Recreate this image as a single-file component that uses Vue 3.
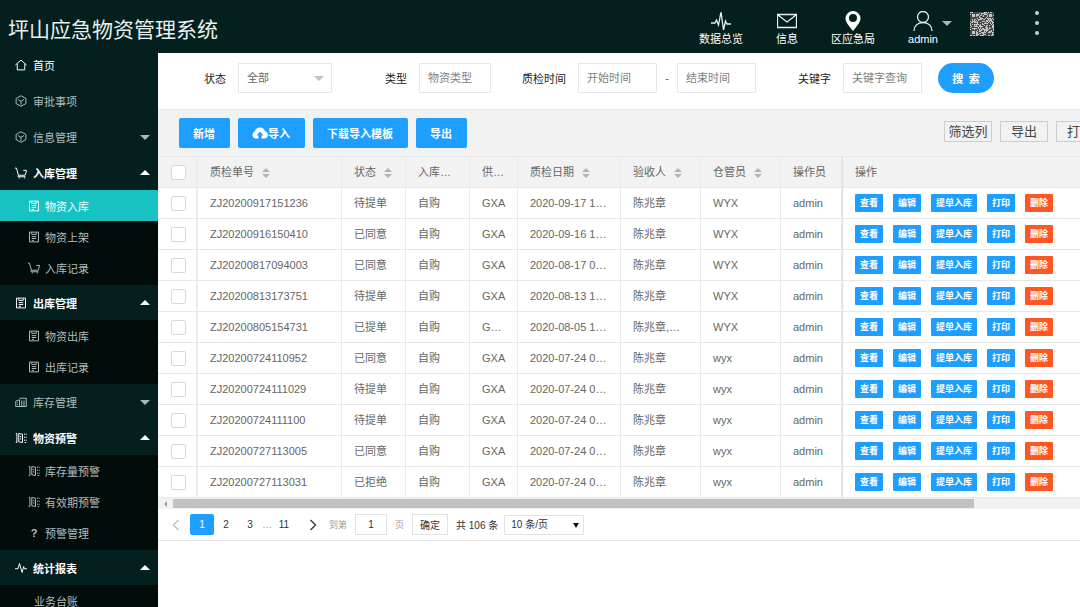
<template>
    <div class="layout">
        <aside class="sidebar">
            <h1 class="brand">坪山应急物资管理系统</h1>
            <nav>
                <ul class="menu">
                    <li v-for="item in menus" :key="item.name">
                        <a href="#" class="menu-item" :class="{ open: item.children, home: item.home }">
                            <svg class="menu-icon" viewBox="0 0 16 16"><path :d="icons[item.icon]" /></svg>
                            <span>{{ item.name }}</span>
                            <i v-if="item.children" class="arrow up"></i>
                            <i v-else-if="item.folded" class="arrow down"></i>
                        </a>
                        <ul v-if="item.children" class="submenu">
                            <li v-for="child in item.children" :key="child.name">
                                <a href="#" class="sub-item" :class="{ active: child.active, plain: !child.icon }">
                                    <b v-if="child.icon === 'help'" class="help">?</b>
                                    <svg v-else-if="child.icon" class="menu-icon" viewBox="0 0 16 16">
                                        <path :d="icons[child.icon]" />
                                    </svg>
                                    <span>{{ child.name }}</span>
                                </a>
                            </li>
                        </ul>
                    </li>
                </ul>
            </nav>
        </aside>

        <div class="main">
            <header class="topbar">
                <a href="#" class="top-link">
                    <svg viewBox="0 0 20 20"><path d="M0 12h4l1.500-3 2 5 2.500-13 2.500 18 2-9 1.500 3h4" /></svg>
                    <span>数据总览</span>
                </a>
                <a href="#" class="top-link">
                    <svg class="mail" viewBox="0 0 20 20"><path d="M0.500 3.500h19v13h-19zM1 4l9 7 9-7" /></svg>
                    <span>信息</span>
                </a>
                <a href="#" class="top-link">
                    <svg class="pin" viewBox="0 0 20 20">
                        <path fill-rule="evenodd" d="M10 0a7.500 7.500 0 0 1 7.500 7.500c0 4-4.500 8.500-7.500 12.500C7 16 2.500 11.500 2.500 7.500A7.500 7.500 0 0 1 10 0zm0 3a4 4 0 1 0 0 8 4 4 0 0 0 0-8z" />
                    </svg>
                    <span>区应急局</span>
                </a>
                <div class="user">
                    <a href="#" class="top-link">
                        <svg viewBox="0 0 20 20"><circle cx="10" cy="6" r="5.500" /><path d="M1 20c0-5 3.500-8.500 9-8.500s9 3.500 9 8.500" /></svg>
                        <span>admin</span>
                    </a>
                    <i class="arrow down"></i>
                    <svg class="qr" viewBox="0 0 24 24" shape-rendering="crispEdges">
                        <rect v-for="(cell, i) in qrCells" :key="i" :x="cell.x" :y="cell.y" width="1" height="1" />
                        <path d="M1.500 1.500h4v4h-4zM18.500 1.500h4v4h-4zM1.500 18.500h4v4h-4z" />
                    </svg>
                </div>
                <button class="more" aria-label="更多"><i></i><i></i><i></i></button>
            </header>

            <form class="search" @submit.prevent>
                <label for="status">状态</label>
                <div class="select-box status">
                    <select id="status" v-model="status">
                        <option>全部</option>
                    </select>
                    <i class="arrow down"></i>
                </div>
                <label for="type">类型</label>
                <input id="type" class="short" placeholder="物资类型" />
                <label for="start">质检时间</label>
                <input id="start" placeholder="开始时间" />
                <span class="dash">-</span>
                <input id="end" placeholder="结束时间" aria-label="结束时间" />
                <label for="keyword">关键字</label>
                <input id="keyword" placeholder="关键字查询" />
                <button class="search-btn">搜&ensp;索</button>
            </form>

            <section class="table-view">
                <div class="toolbar">
                    <button class="btn">新增</button>
                    <button class="btn">
                        <svg viewBox="0 0 16 12">
                            <path d="M4 11.500A3.700 3.700 0 0 1 2.800 4.400 5.300 5.300 0 0 1 13 4.200a3.700 3.700 0 0 1-1 7.300H9.500V8.500h2L8 4.500l-3.500 4h2v3z" />
                        </svg>导入
                    </button>
                    <button class="btn">下载导入模板</button>
                    <button class="btn">导出</button>
                    <div class="tools">
                        <button>筛选列</button>
                        <button>导出</button>
                        <button>打印</button>
                    </div>
                </div>

                <table>
                    <colgroup>
                        <col v-for="col in columns" :key="col.key" :class="'col-' + col.key" />
                    </colgroup>
                    <thead>
                        <tr>
                            <th v-for="col in columns" :key="col.key" :class="'cell-' + col.key">
                                <input v-if="col.key === 'check'" type="checkbox" aria-label="全选" />
                                <template v-else>{{ col.title }}</template>
                                <span v-if="col.sort" class="sort"><i class="sort-up"></i><i class="sort-down"></i></span>
                            </th>
                        </tr>
                    </thead>
                    <tbody>
                        <tr v-for="row in rows" :key="row[0]">
                            <td class="cell-check"><input type="checkbox" :aria-label="row[0]" /></td>
                            <td v-for="(value, i) in row" :key="i">{{ value }}</td>
                            <td class="cell-action">
                                <div class="actions">
                                    <button v-for="name in actions" :key="name" :class="{ danger: name === '删除' }">{{ name }}</button>
                                </div>
                            </td>
                        </tr>
                    </tbody>
                </table>

                <div class="scrollbar">
                    <i class="scroll-left"></i>
                    <div class="thumb"></div>
                    <div class="rest"></div>
                </div>

                <div class="pager">
                    <button class="page-btn disabled" aria-label="上一页">
                        <svg viewBox="0 0 8 12"><path d="M6.500 1l-5 5 5 5" /></svg>
                    </button>
                    <button class="page-btn current">1</button>
                    <button class="page-btn">2</button>
                    <button class="page-btn">3</button>
                    <span class="dots">…</span>
                    <button class="page-btn last">11</button>
                    <button class="page-btn next" aria-label="下一页">
                        <svg viewBox="0 0 8 12"><path d="M1.500 1l5 5-5 5" /></svg>
                    </button>
                    <label class="skip">到第<input v-model="page" />页</label>
                    <button class="confirm">确定</button>
                    <span>共 106 条</span>
                    <div class="select-box limits">
                        <select v-model="limit" aria-label="每页条数">
                            <option>10 条/页</option>
                        </select>
                        <i class="arrow down"></i>
                    </div>
                </div>
            </section>
        </div>
    </div>
</template>

<script setup>
import { ref } from 'vue';

const status = ref('全部');
const page = ref('1');
const limit = ref('10 条/页');

const icons = {
    home: 'M0.500 8L8 1.500 15.500 8M3 6.500v8h10v-8',
    box: 'M8 1l6.500 3.500v7L8 15l-6.500-3.500v-7zM4 6l4 2.500L12 6M8 8.500V13',
    cart: 'M0 1.500h2L4.500 11h9L15.500 4.500H11M4.500 11L4 13h10M5 14.500h1.500M12 14.500h1.500',
    form: 'M2 1.500h12v13H2zM5 2v2.500h6V2M5 7.500h6M5 10h6M5 12.500h3',
    stock: 'M1 7l5-2v9H1zM6 3h9v11H6M3 9h1M3 11.500h1M9 6v8M12 6v8M6 14h9',
    read: 'M1 2h1.500v12H1M5 2l5 1v11l-5-1zM6.500 6l2 .5M6.500 9l2 .5M13 2v2M13 6v2M13 10v2M13 14h2M15 3h1M15 7h1M15 11h1',
    chart: 'M0 9h4l2-7 3.500 12 2-8 1 3H16',
};

const menus = [
    { name: '首页', icon: 'home', home: true },
    { name: '审批事项', icon: 'box' },
    { name: '信息管理', icon: 'box', folded: true },
    {
        name: '入库管理',
        icon: 'cart',
        children: [
            { name: '物资入库', icon: 'form', active: true },
            { name: '物资上架', icon: 'form' },
            { name: '入库记录', icon: 'cart' },
        ],
    },
    {
        name: '出库管理',
        icon: 'form',
        children: [
            { name: '物资出库', icon: 'form' },
            { name: '出库记录', icon: 'form' },
        ],
    },
    { name: '库存管理', icon: 'stock', folded: true },
    {
        name: '物资预警',
        icon: 'read',
        children: [
            { name: '库存量预警', icon: 'read' },
            { name: '有效期预警', icon: 'read' },
            { name: '预警管理', icon: 'help' },
        ],
    },
    { name: '统计报表', icon: 'chart', children: [{ name: '业务台账' }] },
];

const columns = [
    { key: 'check' },
    { key: 'code', title: '质检单号', sort: true },
    { key: 'status', title: '状态', sort: true },
    { key: 'type', title: '入库类型' },
    { key: 'supplier', title: '供应商' },
    { key: 'date', title: '质检日期', sort: true },
    { key: 'checker', title: '验收人', sort: true },
    { key: 'keeper', title: '仓管员', sort: true },
    { key: 'operator', title: '操作员' },
    { key: 'action', title: '操作' },
];

const actions = ['查看', '编辑', '提单入库', '打印', '删除'];

const rows = [
    ['ZJ20200917151236', '待提单', '自购', 'GXA', '2020-09-17 15:12', '陈兆章', 'WYX', 'admin'],
    ['ZJ20200916150410', '已同意', '自购', 'GXA', '2020-09-16 15:04', '陈兆章', 'WYX', 'admin'],
    ['ZJ20200817094003', '已同意', '自购', 'GXA', '2020-08-17 09:40', '陈兆章', 'WYX', 'admin'],
    ['ZJ20200813173751', '待提单', '自购', 'GXA', '2020-08-13 17:37', '陈兆章', 'WYX', 'admin'],
    ['ZJ20200805154731', '已提单', '自购', 'GXAB', '2020-08-05 15:47', '陈兆章,王宇', 'WYX', 'admin'],
    ['ZJ20200724110952', '已同意', '自购', 'GXA', '2020-07-24 00:00', '陈兆章', 'wyx', 'admin'],
    ['ZJ20200724111029', '待提单', '自购', 'GXA', '2020-07-24 00:00', '陈兆章', 'wyx', 'admin'],
    ['ZJ20200724111100', '待提单', '自购', 'GXA', '2020-07-24 00:00', '陈兆章', 'wyx', 'admin'],
    ['ZJ20200727113005', '已同意', '自购', 'GXA', '2020-07-24 00:00', '陈兆章', 'wyx', 'admin'],
    ['ZJ20200727113031', '已拒绝', '自购', 'GXA', '2020-07-24 00:00', '陈兆章', 'wyx', 'admin'],
];

// dark modules of the QR code
const qrCells = [];
let seed = 7;
for (let y = 0; y < 24; y++) {
    for (let x = 0; x < 24; x++) {
        seed = (seed * 1103515 + 12345) % 65521;
        if (seed % 100 < 52) {
            qrCells.push({ x, y });
        }
    }
}
</script>

<style>
body {
    background: #fff;
    overflow: hidden;
}
</style>

<style scoped>
* {
    box-sizing: border-box;
}

.layout {
    display: flex;
    height: 100vh;
    overflow: hidden;
    font-family: "Liberation Sans", "Noto Sans CJK SC", sans-serif;
    font-size: 11px;
    color: #666;
}

button,
input,
select {
    font: inherit;
    color: inherit;
    margin: 0;
}

button {
    cursor: pointer;
    white-space: nowrap;
}

a {
    color: inherit;
    text-decoration: none;
}

ul {
    list-style: none;
    margin: 0;
    padding: 0;
}

.arrow {
    flex: none;
    border: 5px solid transparent;
}

.arrow.up {
    border-top: 0;
    border-bottom-color: #fff;
}

.arrow.down {
    border-bottom: 0;
    border-top-color: #a9b8b7;
}

/* sidebar; the system name runs over the top bar */
.sidebar {
    position: relative;
    z-index: 1;
    flex: none;
    width: 158px;
    background: #03201f;
    color: #b3bcbc;
}

.brand {
    margin: 0;
    height: 47px;
    padding: 15px 0 0 8px;
    font-size: 21px;
    line-height: 30px;
    font-weight: normal;
    color: #e8f0f0;
    white-space: nowrap;
}

.menu-item {
    display: flex;
    align-items: center;
    gap: 6px;
    height: 36px;
    padding: 0 8px 0 15px;
}

.menu-item span {
    flex: 1;
}

.menu-item.home {
    color: #fff;
}

.menu-item.open {
    height: 35px;
    color: #fff;
    font-weight: bold;
}

.menu-icon {
    width: 12px;
    height: 12px;
    fill: none;
    stroke: currentColor;
    stroke-width: 1.3;
}

.submenu {
    padding-bottom: 2px;
    background: #010c0b;
}

.sub-item {
    display: flex;
    align-items: center;
    gap: 5px;
    height: 31px;
    padding-left: 28px;
}

.sub-item.plain {
    padding-left: 34px;
}

.sub-item.active {
    background: #16c2c2;
    color: #fff;
}

.help {
    width: 12px;
    text-align: center;
}

/* header */
.main {
    flex: 1;
    min-width: 0;
    overflow: hidden;
}

.topbar {
    display: flex;
    justify-content: flex-end;
    gap: 33px;
    height: 53px;
    padding: 11px 36px 0 0;
    background: #03201f;
    color: #fff;
}

.top-link {
    display: flex;
    flex-direction: column;
    align-items: center;
    line-height: 16px;
}

.top-link svg {
    width: 20px;
    height: 20px;
    fill: none;
    stroke: #e8f0f0;
    stroke-width: 1.3;
}

.top-link .pin {
    fill: #fff;
    stroke: none;
}

.user {
    display: flex;
    align-items: flex-start;
}

.user .arrow {
    margin: 10px 18px 0 4px;
}

.qr {
    width: 24px;
    height: 24px;
    margin-top: 1px;
    background: #c4c4c4;
    fill: #4a4a4a;
}

.qr path {
    fill: #c4c4c4;
    stroke: #4a4a4a;
}

.more {
    display: flex;
    flex-direction: column;
    gap: 6px;
    width: 14px;
    height: 30px;
    margin-left: 3px;
    padding: 0 0 0 5px;
    border: 0;
    background: none;
}

.more i {
    width: 4px;
    height: 4px;
    border-radius: 50%;
    background: #c5cfce;
}

/* search form */
.search {
    display: flex;
    align-items: center;
    height: 56px;
    padding: 0 0 6px 3px;
}

.search label {
    flex: none;
    width: 65px;
    margin: 0 12px 0 10px;
    text-align: right;
    color: #222;
}

.search label:first-child {
    margin-left: 0;
}

.search input,
.search select {
    width: 79px;
    height: 30px;
    padding: 0 8px;
    border: 1px solid #e6e6e6;
    background: #fff;
    border-radius: 1px;
    outline: none;
}

.search input.short {
    width: 72px;
}

.search input::placeholder {
    color: #808080;
}

.select-box {
    position: relative;
    flex: none;
}

.select-box select {
    width: 100%;
    appearance: none;
    border-radius: 1px;
}

.select-box .arrow {
    position: absolute;
    right: 8px;
    top: 50%;
    margin-top: -2px;
    pointer-events: none;
    border-top-color: #c2c2c2;
}

.status {
    width: 94px;
}

.dash {
    width: 20px;
    text-align: center;
}

.search-btn {
    width: 56px;
    height: 30px;
    margin-left: 16px;
    padding: 0;
    border: 0;
    border-radius: 15px;
    background: #1e9fff;
    color: #fff;
    font-weight: bold;
}

/* toolbar and table; the view runs past the right edge */
.table-view {
    margin-right: -40px;
}

.toolbar {
    display: flex;
    align-items: center;
    gap: 8px;
    height: 47px;
    padding: 0 16px 0 21px;
    background: #f2f2f2;
    border-top: 1px solid #e8e8e8;
}

.btn {
    display: flex;
    align-items: center;
    height: 30px;
    padding: 0 15px 0 14px;
    border: 0;
    border-radius: 2px;
    background: #1e9fff;
    color: #fff;
    font-weight: bold;
}

.btn svg {
    width: 16px;
    height: 12px;
    fill: #fff;
}

.tools {
    display: flex;
    gap: 8px;
    margin: 0 0 4px auto;
}

.tools button {
    width: 48px;
    height: 21px;
    padding: 0;
    border: 1px solid #ccc;
    background: none;
    font-size: 13px;
    line-height: 19px;
    color: #444;
}

table {
    width: 100%;
    table-layout: fixed;
    border-collapse: separate;
    border-spacing: 0;
    border-top: 1px solid #e8e8e8;
}

.col-check {
    width: 40px;
}

.col-code {
    width: 144px;
}

.col-status,
.col-type {
    width: 64px;
}

.col-supplier {
    width: 48px;
}

.col-date {
    width: 103px;
}

.col-checker,
.col-keeper {
    width: 80px;
}

.col-operator {
    width: 61px;
}

th,
td {
    height: 31px;
    padding: 0 10px 0 12px;
    border-right: 1px solid #ebebeb;
    border-bottom: 1px solid #e8e8e8;
    text-align: left;
    font-weight: normal;
    line-height: 16px;
    white-space: nowrap;
    overflow: hidden;
    text-overflow: ellipsis;
}

.cell-check {
    padding-left: 13px;
    border-right: 2px solid #ececec;
}

th {
    background: #f2f2f2;
}

.cell-action {
    border-left: 1px solid #dcdcdc;
}

input[type="checkbox"] {
    display: block;
    appearance: none;
    width: 15px;
    height: 15px;
    border: 1px solid #d8d8d8;
    border-radius: 2px;
    background: #fff;
}

.sort {
    display: inline-flex;
    flex-direction: column;
    gap: 2px;
    margin-left: 8px;
    vertical-align: middle;
}

.sort i {
    border: 4px solid transparent;
}

.sort .sort-up {
    border-top: 0;
    border-bottom-color: #b2b2b2;
}

.sort .sort-down {
    border-bottom: 0;
    border-top-color: #b2b2b2;
}

.actions {
    display: flex;
    gap: 10px;
}

.actions button {
    height: 18px;
    padding: 0 5px;
    border: 0;
    border-radius: 1px;
    background: #1e9fff;
    color: #fff;
    font-size: 9px;
    font-weight: bold;
    line-height: 18px;
}

.actions .danger {
    background: #ff5722;
}

.scrollbar {
    display: flex;
    align-items: center;
    height: 11px;
    background: #f1f1f1;
}

.scroll-left {
    margin: 0 6px 0 3px;
    border: 3px solid transparent;
    border-right-color: #a3a3a3;
}

.thumb {
    flex: 11;
    height: 9px;
    background: #c1c1c1;
}

.rest {
    flex: 2;
}

/* pagination */
.pager {
    display: flex;
    align-items: center;
    height: 32px;
    padding-left: 3px;
    border-bottom: 1px solid #e8e8e8;
    font-size: 10px;
    color: #333;
}

.page-btn {
    width: 24px;
    height: 21px;
    padding: 0;
    border: 0;
    background: none;
}

.page-btn:first-child {
    width: 29px;
}

.page-btn svg {
    display: block;
    width: 8px;
    height: 12px;
    margin: 0 auto;
    fill: none;
    stroke: currentColor;
    stroke-width: 1.3;
}

.page-btn.disabled {
    color: #bbb;
}

.page-btn.current {
    border-radius: 2px;
    background: #1e9fff;
    color: #fff;
}

.page-btn.next {
    margin: 0 4px 0 5px;
}

.dots {
    width: 10px;
    text-align: center;
    color: #999;
}

.skip {
    display: flex;
    align-items: center;
    gap: 8px;
    font-size: 9px;
    color: #999;
}

.skip input {
    width: 32px;
    height: 21px;
    padding: 0;
    border: 1px solid #e2e2e2;
    font-size: 10px;
    text-align: center;
    color: #333;
}

.confirm {
    width: 36px;
    height: 21px;
    margin: 0 8px;
    padding: 0;
    border: 1px solid #e2e2e2;
    background: #fff;
}

.limits {
    width: 80px;
    margin-left: 6px;
}

.limits select {
    height: 20px;
    padding: 0 6px;
    border: 1px solid #e2e2e2;
    background: #fff;
}

.limits .arrow {
    right: 5px;
    border-width: 5px 3px 0;
    border-top-color: #111;
}
</style>
